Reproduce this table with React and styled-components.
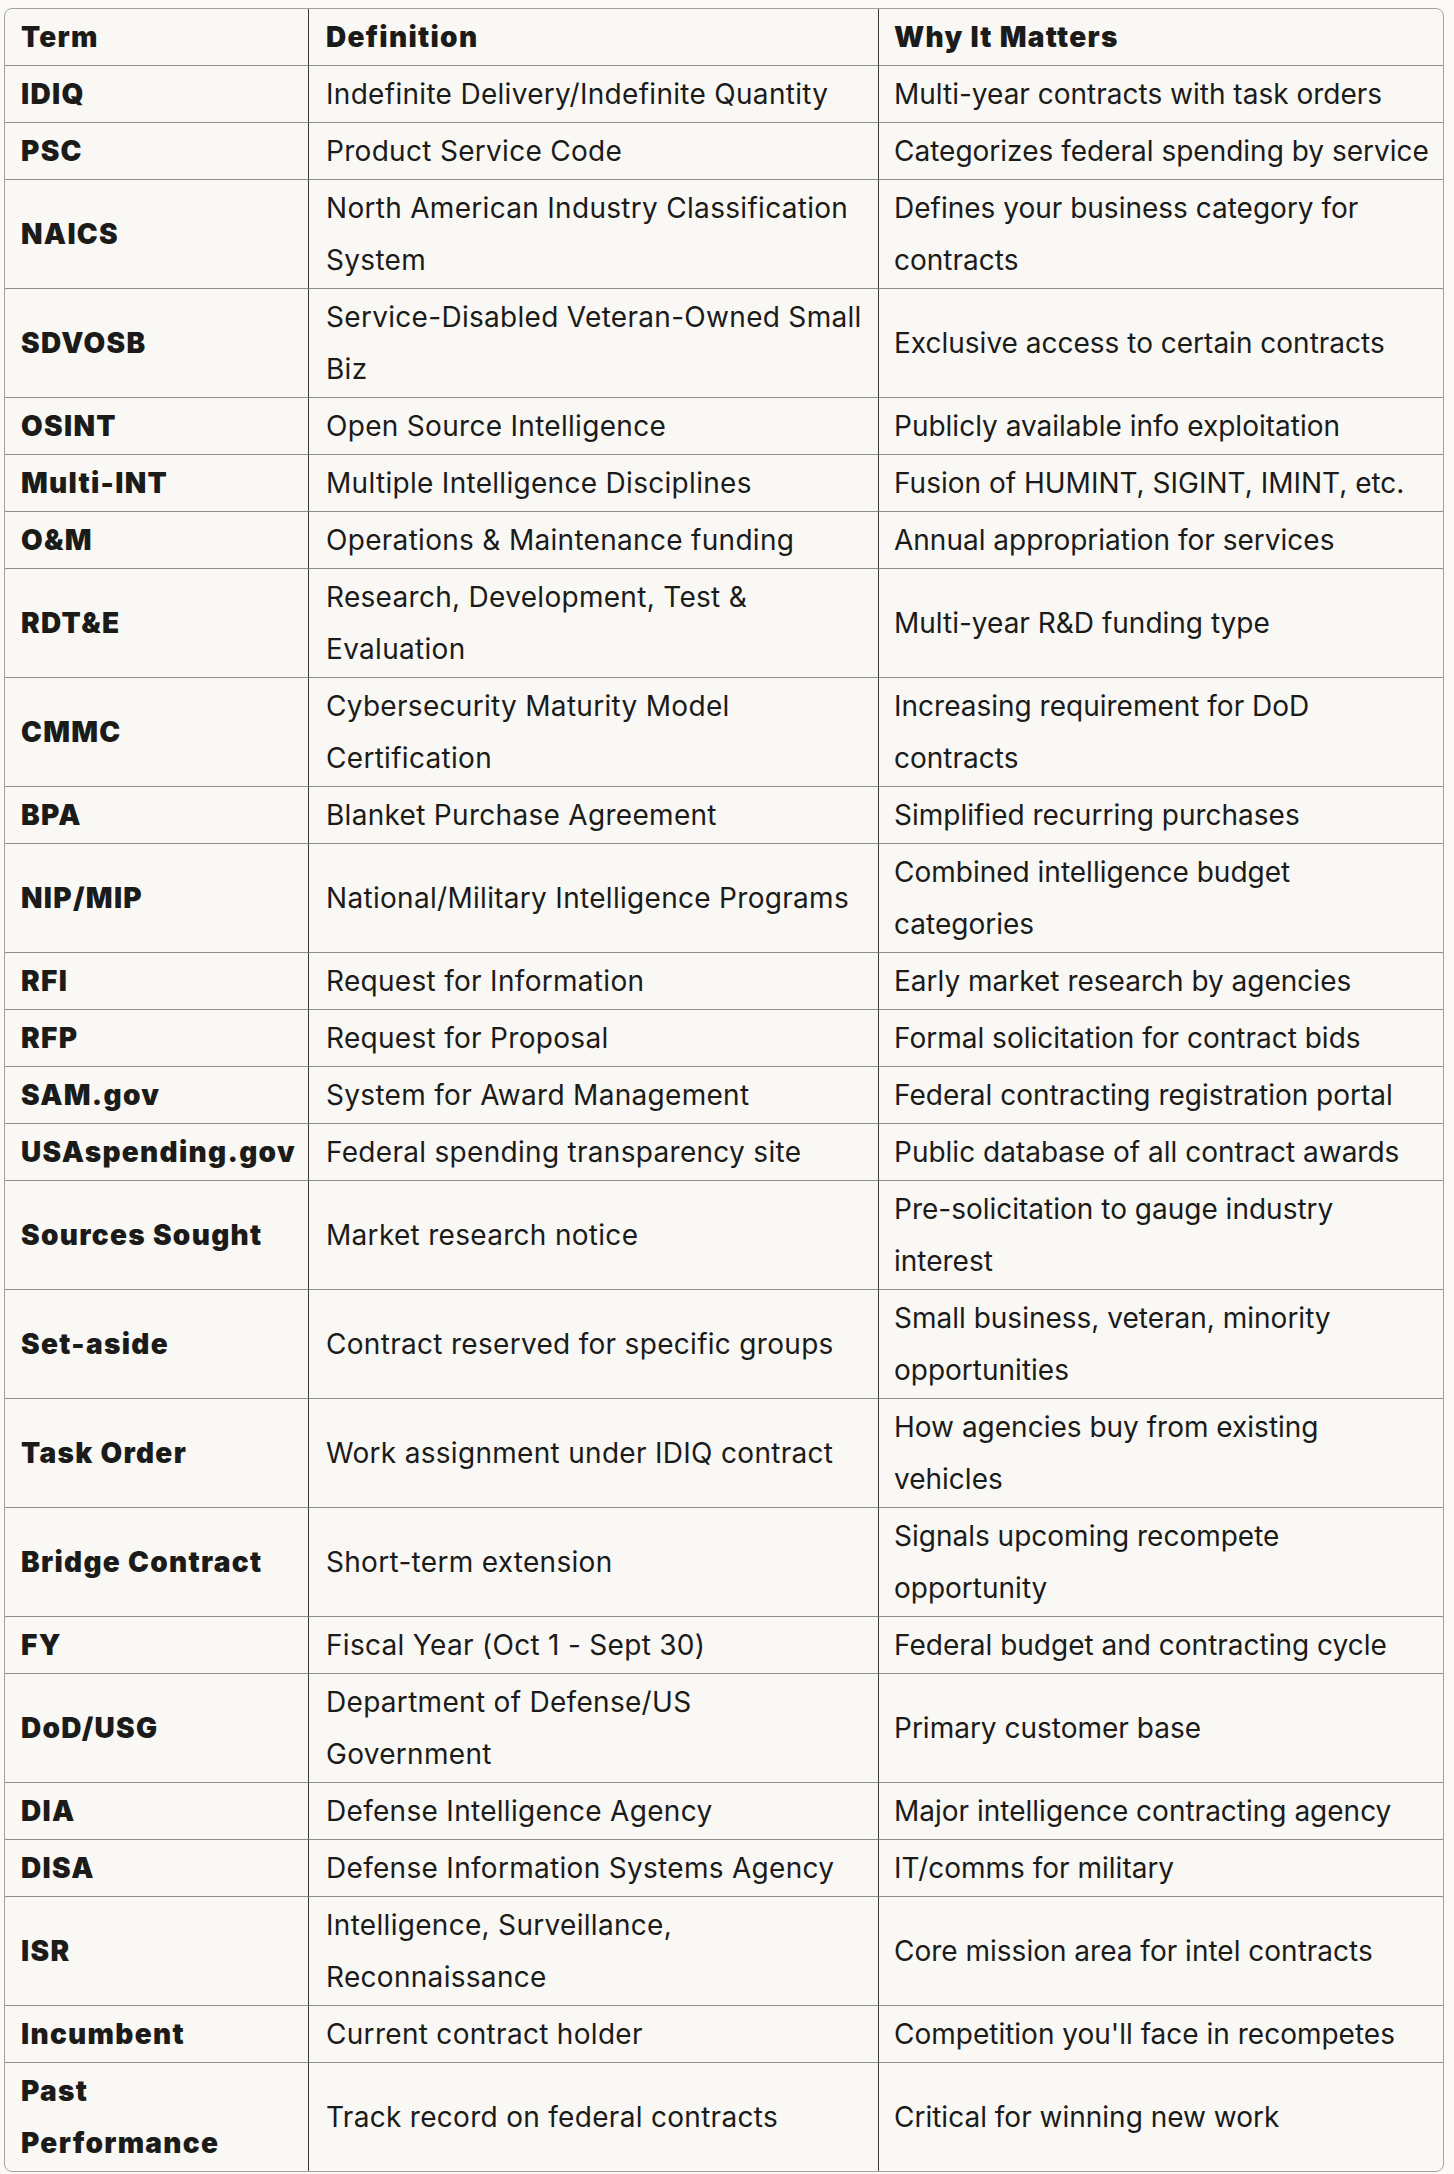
import React from "react";
import styled, { createGlobalStyle } from "styled-components";

const GlobalStyle = createGlobalStyle`
	html, body {
		margin: 0;
		padding: 0;
		background: #faf9f6;
	}
	body {
		font-family: Inter, "Noto Sans", "Liberation Sans", sans-serif;
		color: #1b1b1a;
	}
`;

// each cell is a list of lines, breaks follow the reference
const rows = [
	[["IDIQ"], ["Indefinite Delivery/Indefinite Quantity"], ["Multi-year contracts with task orders"]],
	[["PSC"], ["Product Service Code"], ["Categorizes federal spending by service"]],
	[["NAICS"], ["North American Industry Classification", "System"], ["Defines your business category for", "contracts"]],
	[["SDVOSB"], ["Service-Disabled Veteran-Owned Small", "Biz"], ["Exclusive access to certain contracts"]],
	[["OSINT"], ["Open Source Intelligence"], ["Publicly available info exploitation"]],
	[["Multi-INT"], ["Multiple Intelligence Disciplines"], ["Fusion of HUMINT, SIGINT, IMINT, etc."]],
	[["O&M"], ["Operations & Maintenance funding"], ["Annual appropriation for services"]],
	[["RDT&E"], ["Research, Development, Test &", "Evaluation"], ["Multi-year R&D funding type"]],
	[["CMMC"], ["Cybersecurity Maturity Model", "Certification"], ["Increasing requirement for DoD", "contracts"]],
	[["BPA"], ["Blanket Purchase Agreement"], ["Simplified recurring purchases"]],
	[["NIP/MIP"], ["National/Military Intelligence Programs"], ["Combined intelligence budget", "categories"]],
	[["RFI"], ["Request for Information"], ["Early market research by agencies"]],
	[["RFP"], ["Request for Proposal"], ["Formal solicitation for contract bids"]],
	[["SAM.gov"], ["System for Award Management"], ["Federal contracting registration portal"]],
	[["USAspending.gov"], ["Federal spending transparency site"], ["Public database of all contract awards"]],
	[["Sources Sought"], ["Market research notice"], ["Pre-solicitation to gauge industry", "interest"]],
	[["Set-aside"], ["Contract reserved for specific groups"], ["Small business, veteran, minority", "opportunities"]],
	[["Task Order"], ["Work assignment under IDIQ contract"], ["How agencies buy from existing", "vehicles"]],
	[["Bridge Contract"], ["Short-term extension"], ["Signals upcoming recompete", "opportunity"]],
	[["FY"], ["Fiscal Year (Oct 1 - Sept 30)"], ["Federal budget and contracting cycle"]],
	[["DoD/USG"], ["Department of Defense/US", "Government"], ["Primary customer base"]],
	[["DIA"], ["Defense Intelligence Agency"], ["Major intelligence contracting agency"]],
	[["DISA"], ["Defense Information Systems Agency"], ["IT/comms for military"]],
	[["ISR"], ["Intelligence, Surveillance,", "Reconnaissance"], ["Core mission area for intel contracts"]],
	[["Incumbent"], ["Current contract holder"], ["Competition you'll face in recompetes"]],
	[["Past", "Performance"], ["Track record on federal contracts"], ["Critical for winning new work"]],
];

const Lines = ({ lines }) =>
	lines.map((line, i) => (
		<React.Fragment key={i}>
			{i > 0 && <br />}
			{line}
		</React.Fragment>
	));

const App = () => {
	return (
		<Page>
			<GlobalStyle />
			<Table>
				<colgroup>
					<col style={{ width: 303 }} />
					<col style={{ width: 570 }} />
					<col style={{ width: 565 }} />
				</colgroup>
				<thead>
					<tr>
						<HeadCell>Term</HeadCell>
						<HeadCell>Definition</HeadCell>
						<HeadCell>Why It Matters</HeadCell>
					</tr>
				</thead>
				<tbody>
					{rows.map(([term, def, why], i) => (
						<Row key={i}>
							<Cell bold>
								<Lines lines={term} />
							</Cell>
							<Cell spacing="0.3px">
								<Lines lines={def} />
							</Cell>
							<Cell spacing="0px">
								<Lines lines={why} />
							</Cell>
						</Row>
					))}
				</tbody>
			</Table>
		</Page>
	);
};

const Page = styled.div`
	padding: 8px 11px 2px 4px;
	min-height: 2164px;
`;
const Table = styled.table`
	width: 1440px;
	table-layout: fixed;
	border-collapse: separate;
	border-spacing: 0;
	border: 1px solid #a3a29e;
	border-radius: 8px;
	background-color: #f9f8f5;
	font-size: 28px;
`;
const HeadCell = styled.th`
	text-align: left;
	font-weight: 900;
	letter-spacing: 1.3px;
	line-height: 52px;
	padding: 2px 17px 2px 16px;
	vertical-align: middle;
	white-space: nowrap;
	border-bottom: 1px solid #8f8e8b;
	&:not(:first-child) {
		border-left: 1px solid #3b3a38;
	}
	&:nth-child(2) {
		padding-left: 17px;
	}
	&:last-child {
		padding-left: 15px;
	}
`;
const Row = styled.tr`
	&:last-child td {
		border-bottom: none;
	}
`;
const Cell = styled.td`
	font-weight: ${(props) => (props.bold ? 900 : 400)};
	letter-spacing: ${(props) => (props.bold ? "1.3px" : props.spacing)};
	line-height: 52px;
	padding: 2px 17px 2px 16px;
	vertical-align: middle;
	white-space: nowrap;
	border-bottom: 1px solid #8f8e8b;
	&:not(:first-child) {
		border-left: 1px solid #3b3a38;
	}
	&:nth-child(2) {
		padding-left: 17px;
	}
	&:last-child {
		padding-left: 15px;
	}
`;

export default App;
